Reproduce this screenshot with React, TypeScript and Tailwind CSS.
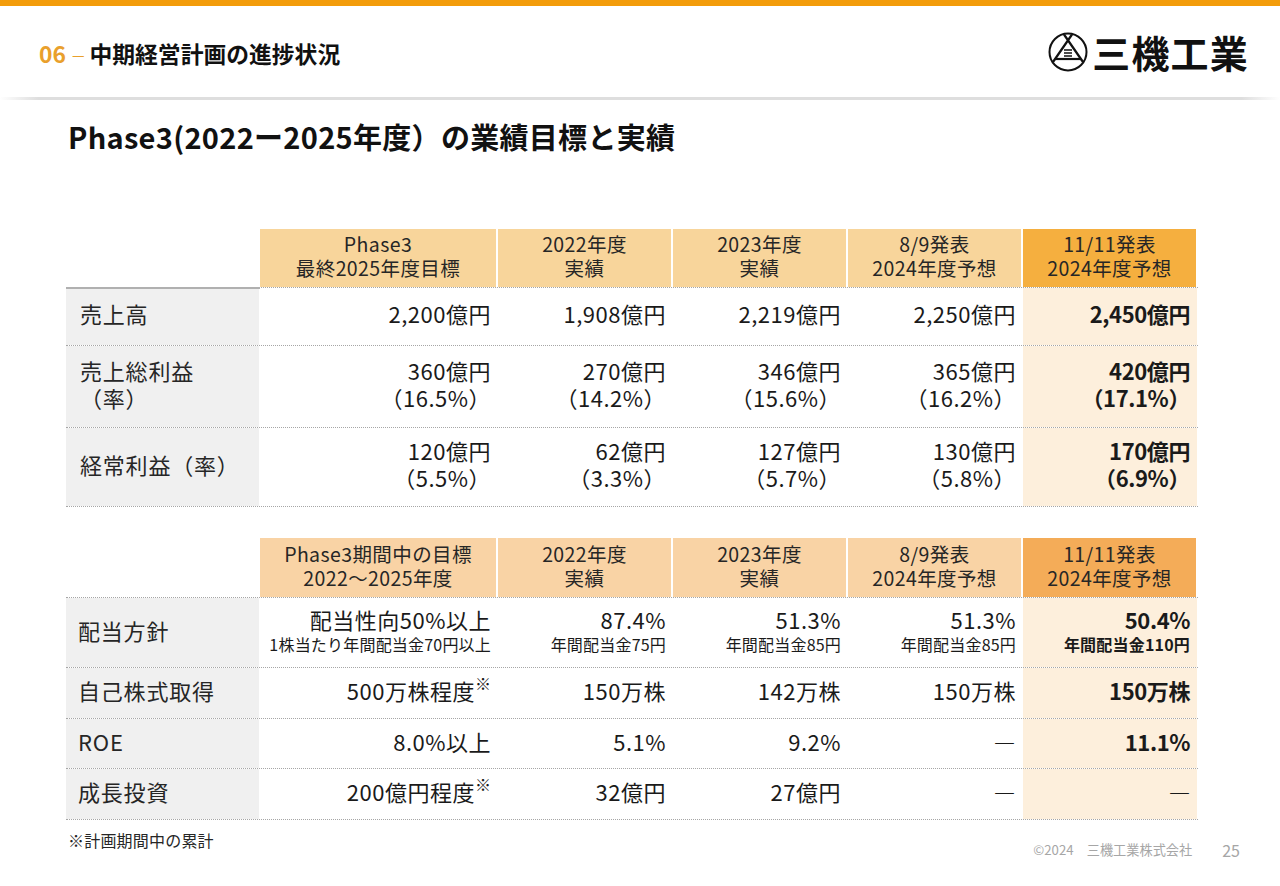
import React from 'react';

const FONT = "font-['Noto_Sans_CJK_JP','Noto_Sans',sans-serif]";

type Row = { label: React.ReactNode; cells: React.ReactNode[]; h: string };

const HeadCell = ({ bg, children }: { bg: string; children: React.ReactNode }) => (
  <div className={`${bg} mr-[2px] flex flex-col items-center justify-center pb-[4px] text-[19.5px] leading-[24px] tracking-[0.4px] text-[#262626]`}>
    {children}
  </div>
);

const Two = ({ a, b }: { a: string; b: string }) => (
  <div className="flex flex-col items-end leading-[27px]">
    <span>{a}</span>
    <span>{b}</span>
  </div>
);

const Sub = ({ a, b }: { a: string; b: string }) => (
  <div className="flex flex-col items-end">
    <span className="leading-[27px]">{a}</span>
    <span className="text-[16px] leading-[22px] tracking-[0.2px]">{b}</span>
  </div>
);

const Note = ({ a }: { a: string }) => (
  <span className="flex items-start">
    {a}
    <span className="mt-[-1px] text-[16px] leading-[20px] tracking-[0px]">※</span>
  </span>
);

const Dash = () => <span className="font-bold">―</span>;

const Table = ({ heads, hdBg, hiBg, rows, headH, lift, labelPad, topLine }: {
  heads: [string, string][];
  hdBg: string;
  hiBg: string;
  rows: Row[];
  headH: string;
  lift: string;
  labelPad: string;
  topLine?: boolean;
}) => (
  <div className="ml-[66px] w-[1132px]">
    <div className={`grid ${headH} grid-cols-[194px_238px_175px_175px_175px_175px]`}>
      <div />
      {heads.map((h, i) => (
        <HeadCell key={i} bg={i === 4 ? hiBg : hdBg}>
          <span>{h[0]}</span>
          <span>{h[1]}</span>
        </HeadCell>
      ))}
    </div>
    <div className="relative border-t border-dotted border-[#a6a6a6]">
      {topLine && <div className="absolute left-0 top-[-1px] h-[2px] w-[194px] bg-[#b0b0b0]" />}
      {rows.map((r, ri) => (
        <div key={ri} className={`grid ${r.h} grid-cols-[194px_238px_175px_175px_175px_175px] border-b border-dotted border-[#a6a6a6]`}>
          <div className={`mr-[1px] flex items-center bg-[#f0f0f0] text-[22px] leading-[27px] tracking-[0.8px] text-[#262626] ${labelPad} ${lift}`}>
            {r.label}
          </div>
          {r.cells.map((c, i) => (
            <div
              key={i}
              className={`flex items-center justify-end pr-[7px] text-[22px] text-[#1a1a1a] ${lift} ${i === 4 ? 'mr-[1px] bg-[#fdefdc] font-bold tracking-[-0.4px]' : 'tracking-[0.5px]'}`}
            >
              {c}
            </div>
          ))}
        </div>
      ))}
    </div>
  </div>
);

const rows1: Row[] = [
  { h: 'h-[58px]', label: '売上高', cells: ['2,200億円', '1,908億円', '2,219億円', '2,250億円', '2,450億円'] },
  {
    h: 'h-[82px]',
    label: (
      <div className="flex flex-col">
        <span>売上総利益</span>
        <span>（率）</span>
      </div>
    ),
    cells: [
      <Two a="360億円" b="（16.5%）" />,
      <Two a="270億円" b="（14.2%）" />,
      <Two a="346億円" b="（15.6%）" />,
      <Two a="365億円" b="（16.2%）" />,
      <Two a="420億円" b="（17.1%）" />,
    ],
  },
  {
    h: 'h-[79px]',
    label: '経常利益（率）',
    cells: [
      <Two a="120億円" b="（5.5%）" />,
      <Two a="62億円" b="（3.3%）" />,
      <Two a="127億円" b="（5.7%）" />,
      <Two a="130億円" b="（5.8%）" />,
      <Two a="170億円" b="（6.9%）" />,
    ],
  },
];

const rows2: Row[] = [
  {
    h: 'h-[70px]',
    label: '配当方針',
    cells: [
      <Sub a="配当性向50%以上" b="1株当たり年間配当金70円以上" />,
      <Sub a="87.4%" b="年間配当金75円" />,
      <Sub a="51.3%" b="年間配当金85円" />,
      <Sub a="51.3%" b="年間配当金85円" />,
      <Sub a="50.4%" b="年間配当金110円" />,
    ],
  },
  { h: 'h-[51px]', label: '自己株式取得', cells: [<Note a="500万株程度" />, '150万株', '142万株', '150万株', '150万株'] },
  { h: 'h-[50px]', label: 'ROE', cells: ['8.0%以上', '5.1%', '9.2%', <Dash />, '11.1%'] },
  { h: 'h-[51px]', label: '成長投資', cells: [<Note a="200億円程度" />, '32億円', '27億円', <Dash />, <Dash />] },
];

export default function App() {
  return (
    <div className={`${FONT} flex h-[886px] w-[1280px] flex-col overflow-hidden bg-white`}>
      <div className="h-[6px] bg-[#f39c0b]" />
      {/* header */}
      <header className="flex h-[91px] items-center justify-between pl-[39px] pr-[31px]">
        <div className="flex items-center pt-[5px] text-[22.8px] font-bold">
          <span className="text-[#e9a02c]">06</span>
          <span className="ml-[6px] text-[14px] font-normal text-[#e9a02c]">—</span>
          <span className="ml-[5px] text-[#111]">中期経営計画の進捗状況</span>
        </div>
        <div className="flex items-center gap-[4px]">
          <svg width="40" height="40" viewBox="0 0 40 40" fill="none" stroke="#111">
            <circle cx="20" cy="20" r="18.5" strokeWidth="2" />
            <path d="M16 2.5 L35 30 M24 2.5 L5 30" strokeWidth="2.2" />
            <path d="M7 27 H33" strokeWidth="2.2" />
            <path d="M16 18 H24 M16 21 H24 M16 24 H24" strokeWidth="1.3" />
          </svg>
          <span className="text-[38px] font-bold leading-none tracking-[1.2px] text-[#111]">三機工業</span>
        </div>
      </header>
      <div className="h-[3px] bg-[linear-gradient(to_right,transparent,#dedede_3%,#dedede_97%,transparent)]" />
      <h1 className="ml-[68px] mt-[18px] text-[29px] font-bold leading-[36px] tracking-[0.3px] text-[#111]">
        Phase3(2022ー2025年度）の業績目標と実績
      </h1>
      <div className="mt-[75px]">
        <Table
          heads={[['Phase3', '最終2025年度目標'], ['2022年度', '実績'], ['2023年度', '実績'], ['8/9発表', '2024年度予想'], ['11/11発表', '2024年度予想']]}
          hdBg="bg-[#f8d59b]"
          hiBg="bg-[#f5af3f]"
          rows={rows1}
          headH="h-[58px]"
          lift="pb-[6px]"
          labelPad="pl-[14px]"
          topLine
        />
      </div>
      <div className="mt-[31px]">
        <Table
          heads={[['Phase3期間中の目標', '2022～2025年度'], ['2022年度', '実績'], ['2023年度', '実績'], ['8/9発表', '2024年度予想'], ['11/11発表', '2024年度予想']]}
          hdBg="bg-[#f9d3a5]"
          hiBg="bg-[#f4ac58]"
          rows={rows2}
          headH="h-[59px]"
          lift="pb-[5px]"
          labelPad="pl-[12px]"
        />
      </div>
      {/* footer */}
      <div className="ml-[68px] mr-[40px] mt-[8px] flex items-start justify-between">
        <span className="text-[16px] leading-[24px] tracking-[0.2px] text-[#262626]">※計画期間中の累計</span>
        <div className="mt-[12px] flex items-center text-[#a6a6a6]">
          <span className="text-[13.2px] leading-[20px]">©2024　三機工業株式会社</span>
          <span className="ml-[30px] text-[16px] leading-[20px]">25</span>
        </div>
      </div>
    </div>
  );
}
